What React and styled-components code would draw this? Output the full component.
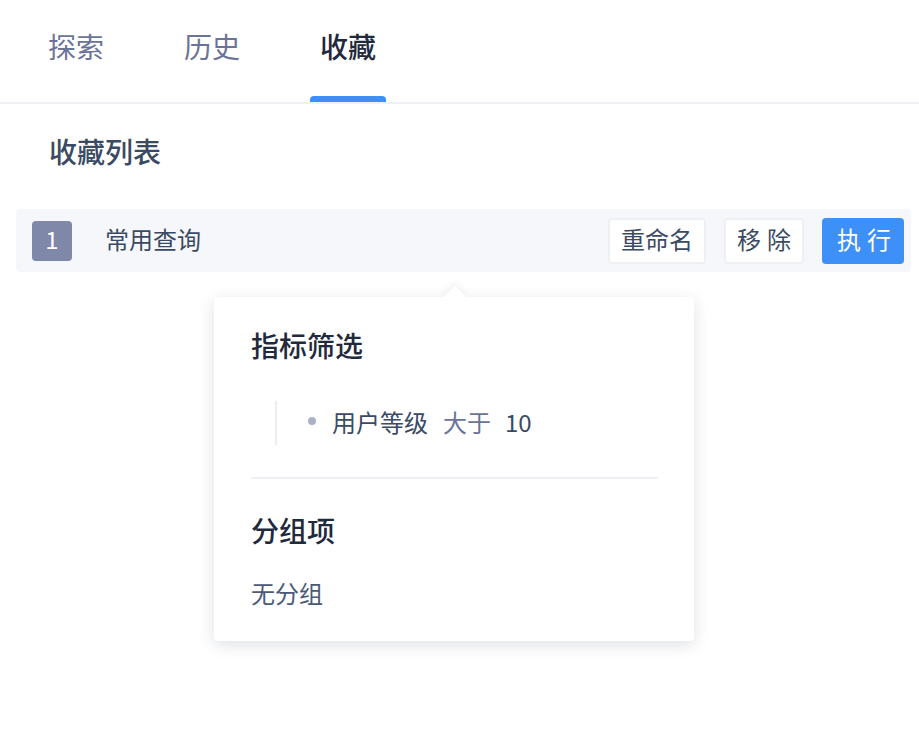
import React, { useState } from 'react'
import styled, { createGlobalStyle } from 'styled-components'

const Global = createGlobalStyle`
body{
margin:0;
background:#fff;
font-family:"Noto Sans CJK SC","Noto Sans",sans-serif;
}
`
const Page = styled.div`
width:100%;
min-height:100vh;
background:#fff;
`
const TabBar = styled.div`
display:flex;
gap:60px;
padding-left:38px;
border-bottom:2px solid #eef0f4;
`
const Tab = styled.div`
display:flex;
flex-direction:column;
width:76px;
height:102px;
cursor:pointer;
`
const TabLabel = styled.div`
flex:1;
display:flex;
align-items:center;
justify-content:center;
padding-bottom:4px;
font-size:28px;
font-weight:${props => props.active ? 500 : 400};
color:${props => props.active ? "#1f2a3c" : "#6a7398"};
`
const Indicator = styled.div`
height:6px;
border-radius:4px 4px 0 0;
background:${props => props.active ? "#3d90f7" : "transparent"};
`
const SectionTitle = styled.h2`
margin:0;
padding:27px 0 0 49px;
font-size:28px;
line-height:40px;
font-weight:500;
color:#3b4a63;
`
const Row = styled.div`
position:relative;
margin:38px 8px 0 16px;
height:63px;
display:flex;
align-items:center;
padding:0 7px 0 16px;
background:#f5f7fa;
border-radius:4px;
`
const Badge = styled.div`
width:40px;
height:40px;
border-radius:4px;
background:#8088a9;
color:#fff;
font-size:24px;
line-height:36px;
display:flex;
align-items:flex-start;
justify-content:center;
`
const RowName = styled.div`
margin-left:33px;
flex:1;
font-size:24px;
line-height:30px;
padding-bottom:4px;
color:#3b4a63;
`
const Actions = styled.div`
display:flex;
gap:18px;
`
const Button = styled.button`
height:46px;
padding:0 ${props => props.spaced ? "5px" : "11px"} 4px ${props => props.primary ? "13px" : "11px"};
font-family:inherit;
font-size:24px;
line-height:30px;
letter-spacing:${props => props.spaced ? "6px" : "0"};
border-radius:4px;
border:2px solid ${props => props.primary ? "#3d90f7" : "#eef0f3"};
background:${props => props.primary ? "#3d90f7" : "#fff"};
color:${props => props.primary ? "#fff" : "#3b4a63"};
cursor:pointer;
`
const Popover = styled.div`
position:absolute;
top:88px;
left:198px;
width:480px;
box-sizing:border-box;
padding:28px 36px 28px 37px;
background:#fff;
border-radius:4px;
box-shadow:0 4px 16px rgba(30,40,70,0.14);
&::before{
content:"";
position:absolute;
top:-8px;
left:233px;
width:16px;
height:16px;
background:#fff;
transform:rotate(45deg);
box-shadow:-3px -3px 6px rgba(30,40,70,0.05);
}
`
const PopTitle = styled.div`
position:relative;
font-size:28px;
line-height:40px;
font-weight:500;
color:#1f2a3c;
`
const FilterList = styled.ul`
list-style:none;
margin:36px 0 0 24px;
padding:0 0 0 31px;
border-left:2px solid #eceef2;
`
const FilterItem = styled.li`
display:flex;
align-items:center;
height:44px;
padding-bottom:4px;
box-sizing:border-box;
font-size:24px;
color:#3b4a63;
`
const Dot = styled.span`
width:8px;
height:8px;
border-radius:50%;
background:#a9b0c9;
margin-right:16px;
`
const Op = styled.span`
color:#6a7398;
margin:0 14px 0 15px;
`
const Divider = styled.div`
height:2px;
background:#eef0f3;
margin:32px 0 31px;
`
const Empty = styled.div`
margin-top:23px;
font-size:24px;
line-height:40px;
color:#4a5a78;
`

const tabs = ["探索", "历史", "收藏"]

const App = () => {
    const [active, setActive] = useState(2)
    return (
        <Page>
            <Global />
            <TabBar>
                {tabs.map((t, i) => (
                    <Tab key={t} onClick={() => setActive(i)}>
                        <TabLabel active={i === active}>{t}</TabLabel>
                        <Indicator active={i === active} />
                    </Tab>
                ))}
            </TabBar>
            <SectionTitle>收藏列表</SectionTitle>
            <Row>
                <Badge>1</Badge>
                <RowName>常用查询</RowName>
                <Actions>
                    <Button>重命名</Button>
                    <Button spaced>移除</Button>
                    <Button primary spaced>执行</Button>
                </Actions>
                <Popover>
                    <PopTitle>指标筛选</PopTitle>
                    <FilterList>
                        <FilterItem>
                            <Dot />
                            用户等级
                            <Op>大于</Op>
                            10
                        </FilterItem>
                    </FilterList>
                    <Divider />
                    <PopTitle>分组项</PopTitle>
                    <Empty>无分组</Empty>
                </Popover>
            </Row>
        </Page>
    )
}

export default App
